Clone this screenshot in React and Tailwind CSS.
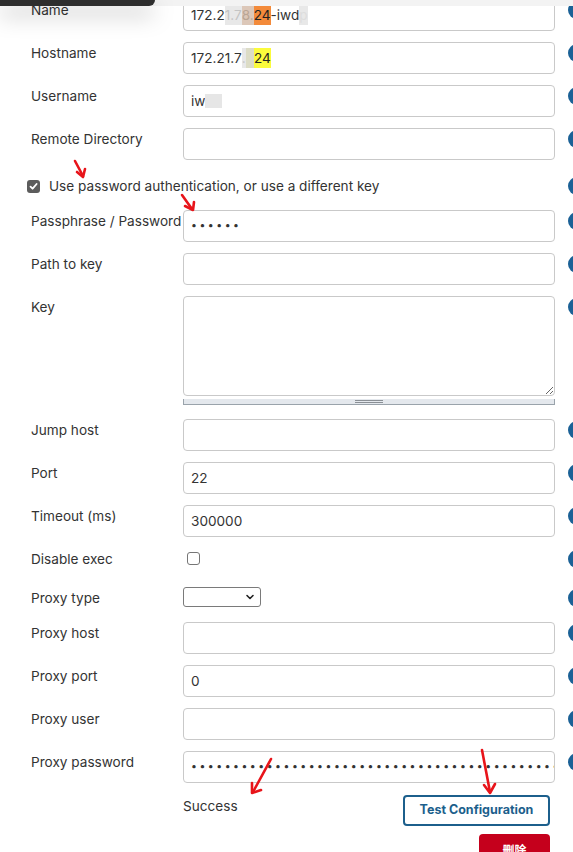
import { ChevronDown } from 'lucide-react';

const HelpIcon = () => (
  <div className="ml-[13px] mt-[2px] w-[18px] h-[18px] shrink-0 rounded-full bg-[#1b6196]" />
);

const Row = ({ label, children, className = '' }) => (
  <div className={`flex items-start ${className}`}>
    <div className="w-[152px] shrink-0 pt-px text-[13.6px] leading-5 text-[#333] whitespace-nowrap">{label}</div>
    <div className="w-[372px] shrink-0">{children}</div>
    <HelpIcon />
  </div>
);

const Field = ({ children }) => (
  <div className="h-8 rounded-[4px] border border-[#c9c9c9] bg-white px-[7px] flex items-center text-[13.6px] text-[#333] overflow-hidden whitespace-nowrap">
    {children}
  </div>
);

const Blur = ({ children, className = '' }) => (
  <span className={`text-[#c4c4c4] bg-[#e8e8e8] ${className}`}>{children}</span>
);

const Dots = ({ count }) => (
  <span className="text-[10.5px] tracking-[2.5px] text-[#333]">{'•'.repeat(count)}</span>
);

const Arrows = () => (
  <svg className="absolute inset-0 pointer-events-none" width="573" height="852" viewBox="0 0 573 852">
    <g fill="none" stroke="#e8141a" strokeWidth="2.6" strokeLinecap="round" strokeLinejoin="round">
      <path d="M75 161 L83 176" />
      <path d="M77 172 L83 177 L85 169" />
      <path d="M182 195 L192 209" />
      <path d="M185 206 L193 210 L194 202" />
      <path d="M271 759 L253 792" />
      <path d="M252 783 L252 793 L261 790" />
      <path d="M482 750 L490 792" />
      <path d="M484 785 L490 793 L495 784" />
    </g>
  </svg>
);

export default function App() {
  return (
    <div className="relative w-[573px] h-screen overflow-hidden bg-white font-['Inter','Liberation_Sans',sans-serif]">
      <div className="mt-[-1px] flex flex-col gap-[11px] pl-[31px]">
        <Row label="Name">
          <Field>
            172.2<Blur>1.7</Blur>
            <span className="text-[#b9a594] bg-[#dcc7b8]">8.</span>
            <span className="bg-[#f38a3a] text-[#222]">24</span>-iwd
            <Blur className="text-[#ddd]">p</Blur>
          </Field>
        </Row>
        <Row label="Hostname">
          <Field>
            172.21.7<Blur className="bg-[#e2e2e2]">.</Blur>
            <span className="bg-[#dcdcc6] text-[#dcdcc6]">8</span>
            <span className="bg-[#fbfb3c] text-[#222]">24</span>
          </Field>
        </Row>
        <Row label="Username">
          <Field>
            iw<span className="inline-block w-[17px] h-[14px] bg-[#e6e6e6]" />
          </Field>
        </Row>
        <Row label="Remote Directory">
          <Field />
        </Row>

        <div className="flex items-center h-[28px] pt-[2px] -ml-[4px]">
          <div className="w-[13px] h-[13px] shrink-0 rounded-[3px] bg-[#5c5c5c] flex items-center justify-center">
            <svg width="9" height="9" viewBox="0 0 9 9">
              <path d="M1.5 4.6 L3.6 6.7 L7.6 2" fill="none" stroke="white" strokeWidth="1.8" strokeLinecap="round" strokeLinejoin="round" />
            </svg>
          </div>
          <span className="ml-[9px] w-[506px] shrink-0 text-[13.6px] leading-5 text-[#333]">
            Use password authentication, or use a different key
          </span>
          <div className="ml-[13px] w-[18px] h-[18px] shrink-0 rounded-full bg-[#1b6196]" />
        </div>

        <Row label="Passphrase / Password">
          <Field>
            <Dots count={6} />
          </Field>
        </Row>
        <Row label="Path to key">
          <Field />
        </Row>
        <Row label="Key" className="h-[112px]">
          <textarea className="block w-full h-[100px] rounded-[4px] border border-[#c9c9c9] bg-white" />
          <div className="mt-[3px] h-[6px] bg-[#e4e8ed] border-x border-b border-[#9aa3ab] flex flex-col items-center justify-center gap-[1px]">
            <div className="w-[28px] h-px bg-[#8a8f95]" />
            <div className="w-[28px] h-px bg-[#8a8f95]" />
          </div>
        </Row>
        <Row label="Jump host">
          <Field />
        </Row>
        <Row label="Port">
          <Field>22</Field>
        </Row>
        <Row label="Timeout (ms)">
          <Field>300000</Field>
        </Row>
        <Row label="Disable exec" className="h-[28px]">
          <div className="ml-[4px] mt-[4px] w-[13px] h-[13px] rounded-[3px] border border-[#767676] bg-white" />
        </Row>
        <Row label="Proxy type" className="h-[24px]">
          <div className="w-[78px] h-[20px] rounded-[3px] border border-[#7a7a7a] bg-white flex items-center justify-end pr-[4px]">
            <ChevronDown size={12} strokeWidth={3.2} color="#222" />
          </div>
        </Row>
        <Row label="Proxy host">
          <Field />
        </Row>
        <Row label="Proxy port">
          <Field>0</Field>
        </Row>
        <Row label="Proxy user">
          <Field />
        </Row>
        <Row label="Proxy password">
          <Field>
            <Dots count={57} />
          </Field>
        </Row>

        <div className="ml-[152px] w-[367px] flex items-start justify-between pt-px">
          <span className="pt-[1px] text-[13.6px] leading-5 text-[#333]">Success</span>
          <button className="w-[147px] h-[31px] rounded-[4px] border-2 border-[#1c5f8c] text-[12.5px] font-bold text-[#1c5f8c]">
            Test Configuration
          </button>
        </div>
        <div className="ml-[152px] w-[367px] -mt-[3px] flex justify-end">
          <button className="w-[71px] h-[31px] rounded-[4px] bg-[#c5001c] text-white text-[12px] font-semibold font-['Noto_Sans_CJK_SC',sans-serif]">
            删除
          </button>
        </div>
      </div>

      <div className="absolute top-0 left-0 w-full h-[6px] bg-[#f3f3f3]" />
      <div className="absolute top-0 left-0 w-[155px] h-[6px] rounded-br-[6px] bg-[#2e2e2e] shadow-[0_8px_22px_rgba(0,0,0,0.35)]" />

      <Arrows />
    </div>
  );
}
